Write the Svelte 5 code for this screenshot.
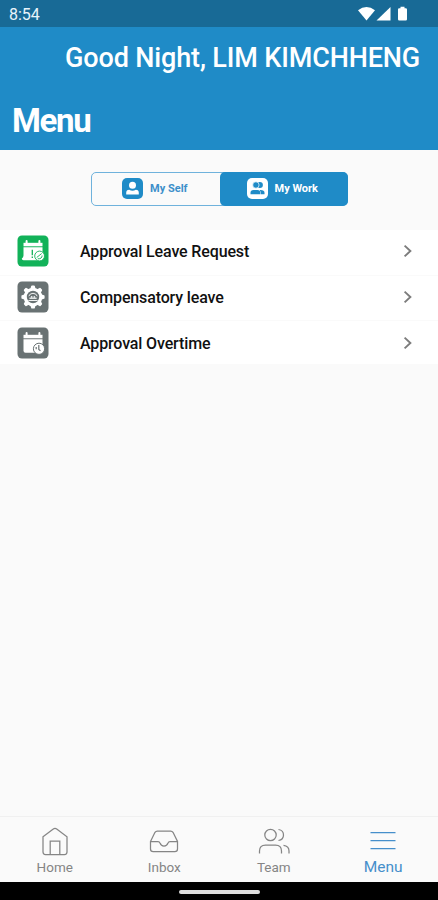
<script>
	let tab = 'work';
	let page = 'Menu';

	const items = [
		{ icon: 'leave', label: 'Approval Leave Request' },
		{ icon: 'gear', label: 'Compensatory leave' },
		{ icon: 'overtime', label: 'Approval Overtime' }
	];

	const pages = ['Home', 'Inbox', 'Team', 'Menu'];
	const teeth = [0, 45, 90, 135, 180, 225, 270, 315];
</script>

<div class="screen">
	<div class="status">
		<span class="status__time">8:54</span>
		<svg class="status__icons" width="52" height="18" viewBox="0 0 52 18" fill="#fff">
			<path d="M0 4.200Q8.500 -2.400 17 4.200L8.500 14.500z" />
			<path d="M32.500 1v13.500H18.500z" />
			<path d="M42.500 .700h4v1.600h1.200q1.300 0 1.300 1.300v9.700q0 1.200-1.200 1.200h-6.600q-1.200 0-1.200-1.200V3.600q0-1.300 1.300-1.300h1.200z" />
		</svg>
	</div>

	<header class="header">
		<div class="header__greeting">Good Night, LIM KIMCHHENG</div>
		<h1 class="header__title">Menu</h1>
	</header>

	<div class="toggle">
		<button class="toggle__button" class:active={tab === 'self'} on:click={() => (tab = 'self')}>
			<svg width="21" height="21" viewBox="0 0 21 21">
				<rect width="21" height="21" rx="5" fill="#1f8bc7" />
				<circle cx="10.5" cy="7.2" r="3.5" fill="#fff" />
				<path d="M4.200 16.500v-1.700q0-3 3-3 3.300 1.700 6.600 0 3 0 3 3v1.700z" fill="#fff" />
			</svg>
			<span>My Self</span>
		</button>
		<button class="toggle__button" class:active={tab === 'work'} on:click={() => (tab = 'work')}>
			<svg width="21" height="21" viewBox="0 0 21 21">
				<rect width="21" height="21" rx="5" fill="#fff" />
				<g fill="#1f8bc7">
					<circle cx="12.900" cy="7" r="3" />
					<path d="M13.700 16.200v-2.300l-1.100-1.800q4.900-.3 4.900 2.600v1.500z" />
					<circle cx="8.900" cy="7" r="3.200" stroke="#fff" stroke-width=".7" />
					<path d="M3.500 16.200v-1.600q0-2.500 3-2.500h4q2.800 0 2.800 2.500v1.600z" />
				</g>
			</svg>
			<span>My Work</span>
		</button>
	</div>

	<div class="list">
		{#each items as item}
			<div class="row">
				<svg class="row__icon" width="32" height="32" viewBox="0 0 32 32">
					<rect x=".5" y=".5" width="31" height="31" rx="4.500" fill={item.icon === 'leave' ? '#12b259' : '#697273'} />
					{#if item.icon === 'gear'}
						<g fill="#fff">
							{#each teeth as angle}
								<path d="M13.300 8l.9-3q.2-.6.8-.6h2q.6 0 .8.600l.9 3z" transform="rotate({angle} 16 16)" />
							{/each}
							<circle cx="16" cy="16" r="9.300" />
						</g>
						<circle cx="16" cy="16" r="6.200" fill="#697273" />
						<path d="M11.800 15.200q1-2.900 4.200-2.900t4.200 2.900M11.400 19.500h9.200" fill="none" stroke="#fff" stroke-width=".9" />
						<path d="M12.400 16.400h1.500v-1.300h1.500v1.300h1.200v-1.300h1.500v1.300h1.500v1.500h-7.200z" fill="#dfe2e2" />
					{:else}
						<path d="M9.600 6v3M22.400 6v3" stroke="#fff" stroke-width="2" stroke-linecap="round" />
						<path d="M6.500 7.800h19v3.500h-19z" fill="#fff" />
						{#if item.icon === 'leave'}
							<path d="M6.500 12.200h19v11q0 2-2 2H6.500q-1.700 0-1.700-1.600 1.700-1 1.700-3z" fill="#fff" />
							<path d="M15.300 14.800v5.400M15.300 21.600v1.500" stroke="#12b259" stroke-width="1.300" />
							<circle cx="22.600" cy="21" r="4.900" fill="#fff" stroke="#12b259" stroke-width=".9" />
							<path d="M19.700 22.500l5-4M20.800 23.800q4.300.2 4.300-3.300" fill="none" stroke="#12b259" stroke-width=".9" />
						{:else}
							<path d="M6.500 12.200h19v13.600h-17q-2 0-2-2z" fill="#fff" />
							<circle cx="22" cy="21.800" r="5.600" fill="#fff" stroke="#697273" stroke-width="1" />
							<path d="M21.800 18v4.500l1.700 1.200M19.200 20v2.300" fill="none" stroke="#697273" stroke-width="1.200" />
						{/if}
					{/if}
				</svg>
				<span class="row__label">{item.label}</span>
				<svg class="row__arrow" width="10" height="14" viewBox="0 0 10 14">
					<path d="M1.600 1.600L7.400 7l-5.800 5.400" fill="none" stroke="#7c7c7c" stroke-width="1.900" />
				</svg>
			</div>
		{/each}
	</div>

	<nav class="nav">
		{#each pages as name}
			<button class="nav__item" class:nav__item--active={page === name} on:click={() => (page = name)}>
				<svg width="32" height="30" viewBox="0 0 32 30" fill="none" stroke="currentColor" stroke-width="1.250">
					{#if name === 'Home'}
						<path d="M4 10.700L14.300 2.900q1.700-1.200 3.400 0L28 10.700V26q0 2.500-2.500 2.500h-19Q4 28.500 4 26z" />
						<path d="M11.200 28.500V15h9.600v13.500" />
					{:else if name === 'Inbox'}
						<path d="M2.500 15.500L7 6.300Q7.800 5 9.300 5h13.400q1.500 0 2.300 1.300l4.500 9.200V23q0 2.700-2.700 2.700H5.200q-2.700 0-2.700-2.700z" />
						<path d="M2.500 15.500H10q1.500 0 2 1.500 1.100 3 4 3t4-3q.5-1.500 2-1.500h7.500" />
					{:else if name === 'Team'}
						<circle cx="12.500" cy="9" r="5.700" />
						<path d="M20.500 3.500q5 .8 5 5.500t-5 5.500M1.500 27.500V25q0-6 6-6h10q6 0 6 6v2.500M25.500 19.300q5.500.7 5.500 5.700v2.500" />
					{:else}
						<path d="M3.500 6.500h25M3.500 14.500h25M3.500 22.500h25" />
					{/if}
				</svg>
				<span class="nav__label">{name}</span>
			</button>
		{/each}
	</nav>

	<div class="system">
		<div class="system__handle"></div>
	</div>
</div>

<style>
	:global(body) {
		margin: 0;
	}

	.screen {
		width: 438px;
		height: 900px;
		display: flex;
		flex-direction: column;
		overflow: hidden;
		background: #fafafa;
		font-family: Roboto, sans-serif;
	}

	svg {
		display: block;
		flex: none;
	}

	button {
		margin: 0;
		padding: 0;
		border: none;
		background: none;
		font-family: inherit;
		cursor: pointer;
	}

	.status {
		height: 27px;
		box-sizing: border-box;
		padding: 2px 28px 0 9px;
		display: flex;
		justify-content: space-between;
		align-items: center;
		flex: none;
		background: #186a96;
		color: #e8f4fb;
	}

	.status__time {
		font-size: 16px;
	}

	.header {
		height: 123px;
		box-sizing: border-box;
		padding: 14px 18px 0 12px;
		flex: none;
		background: #1f8bc7;
		color: #fff;
	}

	.header__greeting {
		text-align: right;
		font-size: 27px;
		font-weight: 500;
		letter-spacing: -0.15px;
		line-height: 35px;
		white-space: nowrap;
	}

	.header__title {
		margin: 25px 0 0;
		font-size: 33px;
		font-weight: 700;
		letter-spacing: -1.3px;
		line-height: 40px;
	}

	.toggle {
		width: 257px;
		height: 34px;
		margin: 22px 0 24px 91px;
		box-sizing: border-box;
		display: flex;
		flex: none;
		border: 1px solid #6fb2dc;
		border-radius: 5px;
	}

	.toggle__button {
		flex: 1;
		padding: 0 3px 2px 0;
		display: flex;
		align-items: center;
		justify-content: center;
		gap: 7px;
		color: #3d8fca;
		font-size: 11px;
		font-weight: 700;
	}

	.toggle__button.active {
		margin: -1px;
		border-radius: 5px;
		background: #1f8bc7;
		color: #fff;
	}

	.list {
		flex: none;
		background: #fff;
	}

	.row {
		height: 45.500px;
		box-sizing: border-box;
		padding: 0 25px 2px 17px;
		display: flex;
		align-items: center;
		border-bottom: 1px solid #fafafa;
	}

	.row:last-child {
		height: 43px;
		padding-bottom: 0;
		border-bottom: none;
	}

	.row__label {
		flex: 1;
		margin: 1px 0 0 31px;
		color: #111;
		font-size: 16px;
		font-weight: 500;
		letter-spacing: -0.14px;
	}

	.nav {
		height: 66px;
		margin-top: auto;
		box-sizing: border-box;
		padding-top: 9px;
		display: grid;
		grid-template-columns: repeat(4, 1fr);
		flex: none;
		border-top: 1px solid #f0f0f0;
	}

	.nav__item {
		display: flex;
		flex-direction: column;
		align-items: center;
		color: #858585;
	}

	.nav__label {
		margin-top: 3px;
		font-size: 13.500px;
		line-height: 17px;
	}

	.nav__item--active {
		color: #468fcb;
	}

	.nav__item--active .nav__label {
		font-size: 15.500px;
	}

	.system {
		height: 18px;
		padding-top: 1px;
		box-sizing: border-box;
		display: flex;
		align-items: center;
		justify-content: center;
		flex: none;
		background: #000;
	}

	.system__handle {
		width: 81px;
		height: 4px;
		border-radius: 2px;
		background: #dedede;
	}
</style>
